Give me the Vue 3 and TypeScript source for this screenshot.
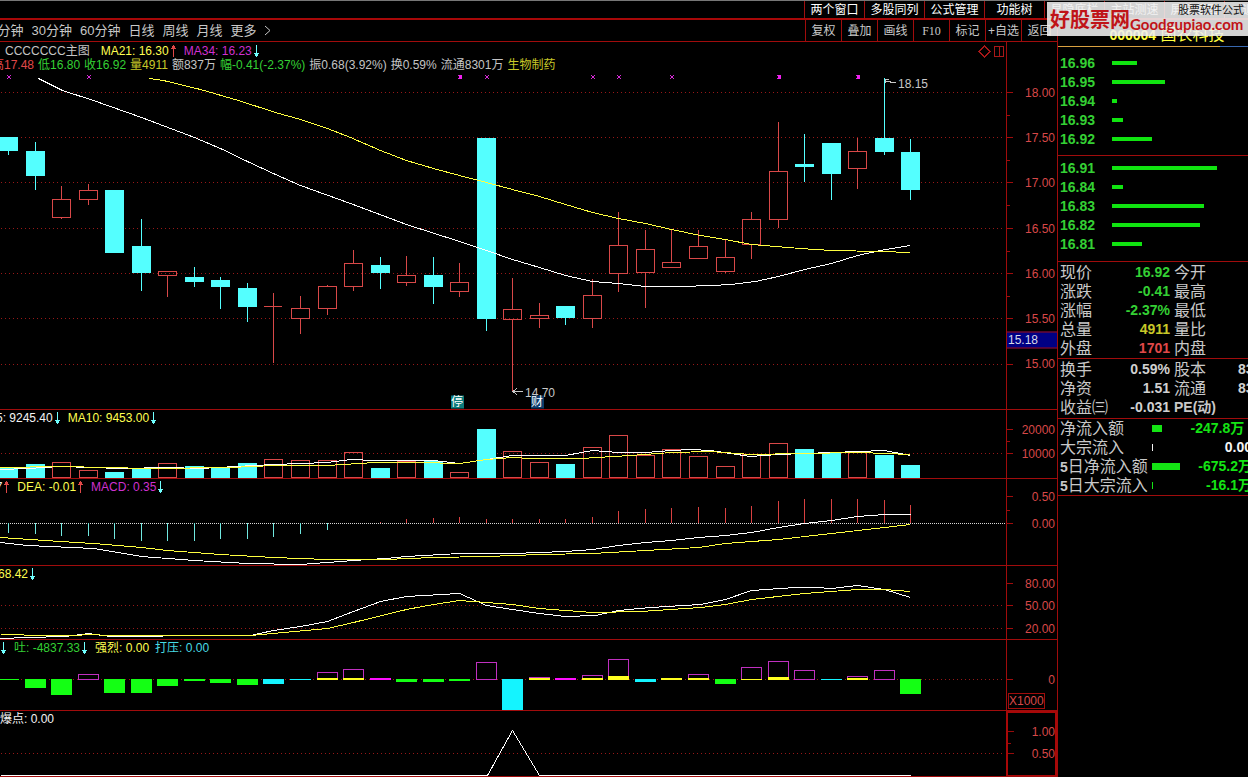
<script setup lang="ts">
type Point = [number, number]
interface LegendItem { text: string; tone: string; arrow?: 'up' | 'down' }
interface Tick { y: number; text: string }

const W = 1006
const periods = ['15分钟', '30分钟', '60分钟', '日线', '周线', '月线', '更多']
const windows = ['两个窗口', '多股同列', '公式管理', '功能树', '显隐底栏', '主站测速', '屏幕截图', '退出']
const tools = ['复权', '叠加', '画线', 'F10', '标记', '+自选', '返回']

const cx = (i: number) => Math.floor(8.62 + i * 26.5335)
const path = (pts: Point[]) => pts.map(p => p.join(',')).join(' ')

// kind, high, body top, body bottom, low
const candles: [string, number, number, number, number][] = [
  ['dn', 137, 137, 151, 155], ['dn', 142, 151, 176, 190], ['up', 186, 199, 218, 219], ['up', 184, 190, 200, 205],
  ['dn', 190, 190, 253, 253], ['dn', 219, 246, 273, 291], ['up', 271, 271, 276, 297], ['dn', 267, 277, 282, 287],
  ['dn', 277, 280, 287, 309], ['dn', 283, 288, 307, 322], ['up', 293, 306, 307, 363], ['up', 296, 308, 319, 334],
  ['up', 285, 286, 309, 315], ['up', 250, 263, 287, 291], ['dn', 257, 265, 273, 289], ['up', 256, 275, 283, 286],
  ['dn', 257, 275, 287, 304], ['up', 263, 282, 292, 297], ['dn', 138, 138, 319, 331], ['up', 278, 309, 320, 391],
  ['up', 303, 315, 319, 328], ['dn', 306, 306, 318, 325], ['up', 279, 295, 319, 328], ['up', 212, 245, 274, 292],
  ['up', 230, 249, 273, 308], ['up', 229, 262, 268, 268], ['up', 230, 246, 259, 259], ['up', 240, 257, 272, 273],
  ['up', 212, 219, 245, 259], ['up', 122, 171, 220, 228], ['dn', 134, 164, 167, 182], ['dn', 143, 143, 174, 200],
  ['up', 138, 151, 169, 189], ['dn', 78, 138, 152, 155], ['dn', 139, 152, 190, 200],
]
const volumeTops = [468, 464, 462, 470, 472, 468, 463, 466, 468, 463, 459, 460, 460, 452, 468, 461, 461, 472, 429, 451, 462, 464, 447, 435, 455, 449, 456, 466, 454, 443, 449, 453, 452, 455, 465]
const macdEnds = [533, 534, 536, 536, 539, 541, 541, 541, 539, 539, 537, 534, 530, 523, 522, 519, 518, 517, 519, 519, 519, 519, 517, 511, 509, 508, 507, 508, 506, 501, 499, 499, 499, 500, 505]

// tone, top, bottom, optional top of the yellow part
const flows: [string, number, number, number?][] = [
  ['g', 679, 680], ['g', 679, 688], ['g', 679, 695], ['m', 674, 680], ['g', 679, 693], ['g', 679, 693], ['g', 679, 686],
  ['g', 679, 681], ['g', 679, 683], ['g', 679, 685], ['c', 679, 684], ['c', 679, 680], ['m', 672, 680, 678], ['m', 669, 680, 678],
  ['s', 678, 680], ['g', 679, 682], ['g', 679, 682], ['g', 679, 681], ['m', 662, 680], ['c', 679, 710], ['m', 677, 680, 678],
  ['s', 678, 680], ['m', 675, 680, 678], ['m', 659, 680, 676], ['c', 679, 682], ['s', 678, 680, 678], ['m', 674, 680, 678],
  ['g', 679, 684], ['m', 667, 680, 679], ['m', 661, 680, 677], ['m', 670, 680], ['c', 679, 680], ['m', 676, 680, 678],
  ['m', 670, 680], ['g', 679, 694],
]

interface Panel {
  id: string; top: number; height: number; grid: number[]; ticks: Tick[]; minor: number[]
  lines: { tone: string; pts: Point[] }[]; legend: LegendItem[][]
}
const panels: Panel[] = [
  {
    id: 'price', top: 42, height: 367, grid: [92, 137, 182, 228, 273, 318, 364],
    ticks: [{ y: 92, text: '18.00' }, { y: 137, text: '17.50' }, { y: 182, text: '17.00' }, { y: 228, text: '16.50' }, { y: 273, text: '16.00' }, { y: 318, text: '15.50' }, { y: 364, text: '15.00' }],
    minor: [115, 160, 205, 251, 296],
    lines: [
      { tone: 'white', pts: [[38, 78], [62, 90], [93, 100], [141, 117], [194, 137], [220, 148], [247, 161], [275, 174], [300, 185], [350, 203], [406, 224], [459, 241], [486, 250], [512, 259], [539, 267], [565, 275], [592, 281], [618, 283], [645, 286], [680, 286], [712, 285], [730, 284], [755, 281], [778, 276], [804, 269], [831, 263], [857, 255], [880, 250], [910, 245]] },
      { tone: 'yellow', pts: [[149, 78], [163, 80], [200, 89], [238, 100], [275, 112], [300, 119], [327, 128], [350, 137], [380, 150], [406, 160], [433, 168], [459, 175], [486, 182], [512, 189], [539, 196], [565, 204], [592, 212], [618, 218], [645, 223], [671, 229], [700, 235], [725, 239], [751, 244], [800, 248], [831, 250], [880, 251], [910, 252]] },
    ],
    legend: [
      [{ text: '', tone: 'red', arrow: 'up' }, { text: 'CCCCCCC主图', tone: 'gray' }, { text: 'MA21: 16.30', tone: 'yellow', arrow: 'up' }, { text: 'MA34: 16.23', tone: 'magenta', arrow: 'down' }],
      [{ text: '高17.48', tone: 'red' }, { text: '低16.80', tone: 'green' }, { text: '收16.92', tone: 'green' }, { text: '量4911', tone: 'gold' }, { text: '额837万', tone: 'gray' }, { text: '幅-0.41(-2.37%)', tone: 'green' }, { text: '振0.68(3.92%)', tone: 'gray' }, { text: '换0.59%', tone: 'gray' }, { text: '流通8301万', tone: 'gray' }, { text: '生物制药', tone: 'gold' }],
    ],
  },
  {
    id: 'volume', top: 410, height: 68, grid: [453],
    ticks: [{ y: 429, text: '20000' }, { y: 453, text: '10000' }], minor: [441],
    lines: [
      { tone: 'white', pts: [[0, 469], [27, 468], [60, 466], [90, 467], [120, 468], [167, 467], [200, 468], [235, 466], [273, 464], [300, 463], [327, 462], [350, 459], [375, 460], [433, 460], [459, 463], [486, 459], [512, 455], [565, 455], [592, 450], [618, 452], [645, 452], [671, 450], [690, 449], [710, 450], [750, 456], [778, 454], [831, 452], [884, 450], [910, 455]] },
      { tone: 'yellow', pts: [[0, 467], [60, 466], [150, 468], [230, 467], [273, 465], [327, 465], [375, 462], [420, 462], [459, 463], [486, 459], [512, 457], [530, 458], [580, 458], [630, 455], [671, 452], [710, 451], [750, 454], [800, 453], [860, 452], [910, 454]] },
    ],
    legend: [[{ text: 'MA5: 9245.40', tone: 'white', arrow: 'down' }, { text: 'MA10: 9453.00', tone: 'yellow', arrow: 'down' }]],
  },
  {
    id: 'macd', top: 479, height: 86, grid: [],
    ticks: [{ y: 496, text: '0.50' }, { y: 523, text: '0.00' }], minor: [510],
    lines: [
      { tone: 'white', pts: [[0, 542], [27, 545], [93, 548], [141, 556], [194, 560], [247, 563], [300, 564], [353, 560], [385, 558], [406, 556], [459, 553], [512, 553], [565, 551], [592, 549], [618, 545], [645, 542], [671, 540], [698, 537], [725, 535], [751, 532], [778, 527], [804, 523], [831, 520], [857, 516], [884, 514], [910, 514]] },
      { tone: 'yellow', pts: [[0, 537], [60, 541], [93, 543], [141, 547], [167, 550], [220, 554], [273, 557], [327, 559], [385, 559], [433, 557], [486, 556], [539, 554], [592, 553], [645, 550], [698, 547], [725, 543], [778, 539], [831, 533], [884, 527], [910, 524]] },
    ],
    legend: [[{ text: 'DIF: 0.17', tone: 'white', arrow: 'up' }, { text: 'DEA: -0.01', tone: 'yellow', arrow: 'up' }, { text: 'MACD: 0.35', tone: 'magenta', arrow: 'down' }]],
  },
  {
    id: 'trend', top: 566, height: 73, grid: [605, 628],
    ticks: [{ y: 583, text: '80.00' }, { y: 605, text: '50.00' }, { y: 628, text: '20.00' }], minor: [],
    lines: [
      { tone: 'white', pts: [[0, 638], [27, 637], [65, 636], [88, 633], [110, 636], [155, 636], [170, 635], [250, 635], [273, 630], [300, 626], [327, 621], [353, 611], [380, 601], [406, 596], [459, 593], [486, 605], [512, 609], [539, 613], [565, 616], [595, 615], [618, 610], [650, 607], [700, 604], [725, 599], [751, 590], [795, 587], [816, 587], [831, 588], [857, 585], [884, 589], [910, 597]] },
      { tone: 'yellow', pts: [[0, 634], [20, 634], [27, 635], [75, 635], [88, 634], [110, 635], [250, 635], [327, 628], [353, 622], [406, 609], [433, 604], [459, 600], [486, 602], [512, 604], [539, 608], [592, 612], [640, 611], [700, 607], [725, 604], [751, 599], [804, 593], [857, 589], [884, 589], [910, 591]] },
    ],
    legend: [[{ text: '68.42', tone: 'yellow', arrow: 'down' }]],
  },
  {
    id: 'flow', top: 640, height: 70, grid: [679], ticks: [{ y: 679, text: '0' }], minor: [], lines: [],
    legend: [[{ text: '', tone: 'white', arrow: 'down' }, { text: '吐: -4837.33', tone: 'green', arrow: 'down' }, { text: '强烈: 0.00', tone: 'yellow' }, { text: '打压: 0.00', tone: 'aqua' }]],
  },
  {
    id: 'burst', top: 711, height: 65, grid: [753], ticks: [{ y: 730, text: '1.00' }, { y: 753, text: '0.50' }], minor: [742],
    lines: [{ tone: 'white', pts: [[0, 775], [487, 775], [512, 730], [539, 775], [910, 775]] }],
    legend: [[{ text: '爆点: 0.00', tone: 'white' }]],
  },
]

const crosses: [number, boolean][] = [[9, false], [89, false], [460, true], [487, false], [593, false], [619, false], [672, false], [779, true], [858, true]]
const notes = [
  { x: 898, y: 83, text: '18.15', kind: 'mark' },
  { x: 525, y: 392, text: '14.70', kind: 'mark' },
  { x: 451, y: 401, text: '停', kind: 'badge teal' },
  { x: 531, y: 401, text: '财', kind: 'badge navy' },
]
const place = (p: Panel, y: number, x?: number) => ({
  top: `${((y + 0.5 - p.top) / p.height) * 100}%`,
  ...(x === undefined ? {} : { left: `${(x / W) * 100}%` }),
})

const asks: [string, number][] = [['16.96', 25], ['16.95', 53], ['16.94', 5], ['16.93', 11], ['16.92', 40]]
const bids: [string, number][] = [['16.91', 105], ['16.84', 11], ['16.83', 92], ['16.82', 88], ['16.81', 30]]
const stats = [
  [['现价', '16.92', 'green', '今开', ''], ['涨跌', '-0.41', 'green', '最高', ''], ['涨幅', '-2.37%', 'green', '最低', ''], ['总量', '4911', 'gold', '量比', ''], ['外盘', '1701', 'red', '内盘', '']],
  [['换手', '0.59%', 'silver', '股本', '8301万'], ['净资', '1.51', 'silver', '流通', '8301万'], ['收益㈢', '-0.031', 'silver', 'PE(动)', '']],
]
const funds: [string, number, string, string][] = [
  ['净流入额', 10, '-247.8万  ', 'lime'], ['大宗流入', 1, '0.00', 'white'], ['5日净流入额', 28, '-675.2万', 'lime'], ['5日大宗流入', 1, '-16.1万', 'lime'],
]
</script>

<template>
  <div class="app">
    <header class="topbar">
      <nav class="windows">
        <button v-for="w in windows" :key="w" type="button">{{ w }}</button>
      </nav>
    </header>

    <a class="brand" href="#">
      <span class="brand-cn">好股票网</span>
      <span class="brand-side">
        <span class="brand-sub">股票软件公式</span>
        <span class="brand-en">Goodgupiao.com</span>
      </span>
    </a>

    <div class="body">
      <main class="left">
        <div class="toolbar">
          <div class="periods">
            <button v-for="p in periods" :key="p" type="button">{{ p }}</button>
            <svg class="chevron" width="7" height="11" viewBox="0 0 7 11"><path d="M1 1L6 5.5L1 10" /></svg>
          </div>
          <div class="tools">
            <button v-for="t in tools" :key="t" type="button" :class="{ serif: t === 'F10' }">{{ t }}</button>
          </div>
        </div>

        <div class="panels">
          <section v-for="p in panels" :key="p.id" class="panel" :class="p.id">
            <div class="plot">
              <svg class="chart" :viewBox="`0 ${p.top} ${W} ${p.height}`" preserveAspectRatio="none">
                <line v-for="g in p.grid" :key="g" class="grid" x1="1" :x2="W - 3" :y1="g + 0.5" :y2="g + 0.5" />

                <template v-if="p.id === 'price'">
                  <g v-for="(c, i) in candles" :key="i" :class="c[0]">
                    <template v-if="c[0] === 'up'">
                      <line :x1="cx(i) + 0.5" :x2="cx(i) + 0.5" :y1="c[1]" :y2="c[2]" />
                      <line :x1="cx(i) + 0.5" :x2="cx(i) + 0.5" :y1="c[3]" :y2="c[4]" />
                      <rect v-if="c[3] - c[2] > 1" :x="cx(i) - 8.5" :y="c[2] + 0.5" width="18" :height="c[3] - c[2] - 1" />
                      <line v-else :x1="cx(i) - 9" :x2="cx(i) + 9" :y1="c[2] + 0.5" :y2="c[2] + 0.5" />
                    </template>
                    <template v-else>
                      <line :x1="cx(i) + 0.5" :x2="cx(i) + 0.5" :y1="c[1]" :y2="c[4]" />
                      <rect :x="cx(i) - 9" :y="c[2]" width="19" :height="c[3] - c[2]" />
                    </template>
                  </g>
                  <g v-for="([x, strong], i) in crosses" :key="'x' + i" class="cross">
                    <path :d="`M${x - 2} 75l4 4M${x + 2} 75l-4 4`" />
                    <rect v-if="strong" :x="x - 1" y="75" width="3" height="4" />
                  </g>
                  <path class="pointer" d="M885 81L896 83M889 79H885V83" />
                  <path class="pointer" d="M513 391.5H523M517 388L513 391.5L517 395" />
                  <path class="tool-icon" d="M984.500 46L990 51.500L984.500 57L979 51.500ZM994.500 46.500H1003.500V56.500H994.500ZM999.500 46.500V56.500" />
                </template>

                <template v-if="p.id === 'volume'">
                  <g v-for="(v, i) in volumeTops" :key="i" :class="candles[i][0]">
                    <rect v-if="candles[i][0] === 'up'" :x="cx(i) - 8.5" :y="v + 0.5" width="18" :height="477 - v" />
                    <rect v-else :x="cx(i) - 9" :y="v" width="19" :height="478 - v" />
                  </g>
                </template>

                <template v-if="p.id === 'macd'">
                  <line class="zero" x1="0" :x2="W" y1="523.5" y2="523.5" />
                  <line v-for="(m, i) in macdEnds" :key="i" :class="m > 523 ? 'neg' : 'pos'" :x1="cx(i) + 0.5" :x2="cx(i) + 0.5" y1="523" :y2="m" />
                </template>

                <template v-if="p.id === 'flow'">
                  <g v-for="(f, i) in flows" :key="i">
                    <rect v-if="f[0] === 'm'" class="fm" :x="cx(i) - 9.5" :y="f[1] + 0.5" width="20" :height="f[2] - f[1] - 1" />
                    <rect v-else :class="'f' + f[0]" :x="cx(i) - 10" :y="f[1]" width="21" :height="f[2] - f[1]" />
                    <rect v-if="f[3]" class="fy" :x="cx(i) - 10" :y="f[3]" width="21" :height="f[2] - f[3]" />
                  </g>
                </template>

                <polyline v-for="(l, i) in p.lines" :key="'l' + i" class="curve" :class="l.tone" :points="path(l.pts)" transform="translate(0.5 0.5)" />
              </svg>

              <div class="legend">
                <div v-for="(row, r) in p.legend" :key="r" class="legend-row" :class="`row-${r}`">
                  <span v-for="(it, i) in row" :key="i" class="item" :class="it.tone">
                    {{ it.text }}<svg v-if="it.arrow" class="arrow" :class="it.arrow" width="9" height="14" viewBox="0 0 9 14">
                      <path v-if="it.arrow === 'down'" d="M4.500 1V13M2 9.500H7M3 10.500H6M3 11.500H6" />
                      <path v-else d="M4.500 1V13M2 4.500H7M3 3.500H6M3 2.500H6" />
                    </svg>
                  </span>
                </div>
              </div>
              <template v-if="p.id === 'price'">
                <span v-for="n in notes" :key="n.text" class="note" :class="n.kind" :style="place(p, n.y, n.x)">{{ n.text }}</span>
              </template>
            </div>

            <div class="axis">
              <svg class="ticks" :viewBox="`0 ${p.top} 50 ${p.height}`" preserveAspectRatio="none">
                <line v-for="t in p.ticks" :key="t.y" x1="0" x2="6" :y1="t.y + 0.5" :y2="t.y + 0.5" />
                <line v-for="m in p.minor" :key="m" x1="0" x2="3" :y1="m + 0.5" :y2="m + 0.5" />
              </svg>
              <span v-for="t in p.ticks" :key="t.text" class="tick" :style="place(p, t.y)">{{ t.text }}</span>
              <span v-if="p.id === 'price'" class="cursor-price" :style="place(p, 339)">15.18</span>
              <span v-if="p.id === 'flow'" class="scale">X1000</span>
            </div>
          </section>
        </div>
      </main>

      <aside class="side">
        <h1 class="stock"><span class="code">000004</span> 国农科技</h1>
        <div class="underline"><i class="gold-line"></i><i class="blue-line"></i></div>
        <ul class="book asks">
          <li v-for="[price, w] in asks" :key="price"><span>{{ price }}</span><i class="bar" :style="{ width: w + 'px' }"></i></li>
        </ul>
        <ul class="book bids">
          <li v-for="[price, w] in bids" :key="price"><span>{{ price }}</span><i class="bar" :style="{ width: w + 'px' }"></i></li>
        </ul>
        <table v-for="(block, b) in stats" :key="b" class="stats">
          <tbody>
            <tr v-for="r in block" :key="r[0]">
              <th scope="row">{{ r[0] }}</th>
              <td :class="r[2]">{{ r[1] }}</td>
              <th scope="row" :class="{ latin: r[3].startsWith('PE') }">{{ r[3] }}</th>
              <td class="silver last">{{ r[4] }}</td>
            </tr>
          </tbody>
        </table>
        <ul class="funds">
          <li v-for="f in funds" :key="f[0]">
            <span class="fund-name"><b v-if="f[0][0] === '5'">5</b>{{ f[0].replace('5', '') }}</span>
            <span class="fund-bar" :class="f[3]"><i :style="{ width: f[1] + 'px' }"></i></span>
            <span class="fund-value" :class="f[3]">{{ f[2] }}</span>
          </li>
        </ul>
      </aside>
    </div>
  </div>
</template>

<style>
html, body { background: #000; }
</style>

<style scoped>
* { box-sizing: border-box; }
.app {
  position: relative;
  display: flex;
  flex-direction: column;
  height: 100vh;
  min-height: 600px;
  min-width: 800px;
  overflow: hidden;
  background: #000;
  color: #c8c8c8;
  font: 12px/14px "Liberation Sans", "Noto Sans CJK SC", sans-serif;
}
button {
  margin: 0;
  padding: 0;
  border: 0;
  background: none;
  color: inherit;
  font: inherit;
  white-space: nowrap;
  cursor: pointer;
}
ul { margin: 0; padding: 0; list-style: none; }

.topbar {
  display: flex;
  justify-content: flex-end;
  height: 20px;
  border-top: 1px solid #777;
  border-bottom: 2px solid #a80808;
}
.windows { display: flex; width: 444px; overflow: hidden; color: #fff; }
.windows button { flex: 0 0 60px; border-left: 1px solid #a01010; }

.brand {
  position: absolute;
  top: 2px;
  right: 0;
  z-index: 2;
  display: flex;
  width: 201px;
  height: 34px;
  padding-left: 3px;
  background: rgba(240, 240, 240, 0.88);
  color: #c01418;
  text-decoration: none;
  white-space: nowrap;
}
.brand-cn { font: bold 20px/34px "Noto Sans CJK SC", sans-serif; }
.brand-side { display: flex; flex-direction: column; width: 114px; }
.brand-sub { align-self: flex-end; color: #111; font-size: 11px; line-height: 16px; }
.brand-en { font: bold 15px/12px Lato, sans-serif; }

.body { flex: 1; display: grid; grid-template-columns: minmax(0, 1fr) 191px; min-height: 0; }
.left { display: flex; flex-direction: column; min-width: 0; min-height: 0; }
.toolbar {
  display: flex;
  justify-content: space-between;
  height: 22px;
  border-bottom: 1px solid #a00c0c;
}
.periods {
  display: flex;
  align-items: center;
  gap: 8px;
  margin-left: -17px;
  font-size: 13px;
}
.chevron path { fill: none; stroke: #c8c8c8; }
.tools { display: flex; }
.tools button { width: 36px; border-left: 1px solid #a00c0c; }
.serif { font-family: "Liberation Serif", serif; }

.panels {
  flex: 1;
  display: grid;
  grid-template-rows: minmax(0, 368fr) minmax(0, 69fr) minmax(0, 87fr) minmax(0, 74fr) minmax(0, 71fr) minmax(0, 66fr);
  min-height: 0;
}
.panel {
  display: grid;
  grid-template-columns: minmax(0, 1fr) 51px;
  min-height: 0;
  border-bottom: 1px solid #a00c0c;
}
.plot { position: relative; overflow: hidden; }
.chart, .ticks { position: absolute; inset: 0; width: 100%; height: 100%; shape-rendering: crispEdges; }
.grid { stroke: #981818; stroke-dasharray: 1 3; }
.zero { stroke: #d8d8d8; stroke-dasharray: 1 1; }
.up line, .up rect { fill: none; stroke: #d84848; }
.dn line { stroke: #54ffff; }
.dn rect { fill: #54ffff; }
.neg { stroke: #70e8e0; }
.pos { stroke: #d84040; }
.curve { fill: none; }
.curve.white { stroke: #fff; }
.curve.yellow { stroke: #ffff40; }
.cross { fill: #f020f0; }
.cross path { stroke: #d828d8; }
.pointer { fill: none; stroke: #c8c8c8; }
.tool-icon { fill: none; stroke: #a81818; }
.fg { fill: #14ff14; }
.fc { fill: #14f4ff; }
.fs { fill: #ff10ff; }
.fy { fill: #ffff20; }
.fm { fill: none; stroke: #c030c0; }

.legend { position: absolute; top: 1px; left: 0; white-space: nowrap; }
.legend-row { display: flex; gap: 6px; height: 14px; }
.item { display: flex; }
.price .legend { top: 2px; }
.price .row-0 { margin-left: -10px; }
.price .row-0 .item:nth-child(3) { margin-left: 5px; }
.price .row-1 { gap: 4px; margin-left: -8px; }
.volume .legend { left: -22px; }
.macd .legend { left: -47px; }
.trend .legend { left: -2px; }
.flow .legend { left: -1px; }
.arrow { fill: none; shape-rendering: crispEdges; }
.arrow.up { stroke: #e04848; }
.arrow.down { stroke: #70ffff; }
.white { color: #f4f4f4; }
.gray { color: #c4c4c4; }
.silver { color: #d0d0d0; }
.yellow { color: #ffff50; }
.gold { color: #c8c828; }
.magenta { color: #d030d0; }
.green { color: #34d034; }
.lime { color: #14e414; }
.aqua { color: #48dce4; }
.red { color: #e04848; }

.note { position: absolute; transform: translateY(-50%); }
.badge { width: 13px; color: #fff; line-height: 13px; }
.teal { background: #0c7c7c; }
.navy { background: #0c3c6c; }

.axis { position: relative; border-left: 1px solid #a00c0c; color: #d84848; }
.ticks line { stroke: #a00c0c; }
.tick { position: absolute; right: 2px; transform: translateY(-50%); }
.cursor-price {
  position: absolute;
  left: 0;
  right: 0;
  padding-left: 1px;
  border: solid #a00c0c;
  border-width: 1px 0;
  background: #000084;
  color: #d8d8e8;
  line-height: 15px;
  transform: translateY(-50%);
}
.scale { position: absolute; left: 1px; bottom: 1px; border: 1px solid #a00c0c; }
.burst .axis { border: 2px solid #a80808; border-bottom-width: 1px; }
.burst .tick { right: 0; }

.side {
  min-width: 0;
  overflow: hidden;
  border-left: 1px solid #a00c0c;
  font-size: 14px;
  line-height: 19px;
}
.stock {
  height: 26px;
  margin: 0;
  padding-top: 4px;
  padding-left: 28px;
  color: #ffff40;
  font-size: 16px;
  font-weight: normal;
  line-height: 22px;
  text-align: center;
}
.code { font-size: 14px; font-weight: bold; }
.underline { display: flex; height: 1px; }
.gold-line { flex: 1; background: #d8a040; }
.blue-line { width: 28px; background: #3868b0; }
.book { border-bottom: 1px solid #a00c0c; }
.asks { padding: 7px 0 6px; }
.bids { padding: 3px 0 7px; }
.book li { display: flex; align-items: center; height: 19px; color: #34d034; font-weight: bold; }
.book span { width: 54px; padding-left: 2px; }
.bar { height: 4px; margin-bottom: 2px; background: #10e410; }
.stats {
  width: 100%;
  table-layout: fixed;
  border-spacing: 0;
  border-bottom: 1px solid #a00c0c;
  padding-top: 1px;
}
.stats:last-of-type { padding-bottom: 1px; }
.stats th, .stats td { height: 19px; padding: 0; white-space: nowrap; }
.stats th {
  width: 52px;
  padding-left: 2px;
  font-size: 16px;
  font-weight: normal;
  line-height: 19px;
  text-align: left;
}
.stats td { font-weight: bold; text-align: right; }
.stats td:nth-child(2) { width: 60px; }
.stats th:nth-child(3) { width: 68px; padding-left: 4px; }
.stats th.latin { font-size: 14px; font-weight: bold; }
.stats .last { text-align: left; }
.funds { border-bottom: 1px solid #a00c0c; }
.funds li { display: flex; align-items: center; height: 19px; padding-left: 2px; }
.fund-name { flex: 0 0 92px; font-size: 16px; white-space: nowrap; }
.fund-name b { font-size: 14px; }
.fund-bar { flex: 0 0 28px; }
.fund-bar i { display: block; height: 7px; background: currentColor; }
.fund-value { flex: 0 0 72px; font-weight: bold; text-align: right; white-space: pre; }
</style>
